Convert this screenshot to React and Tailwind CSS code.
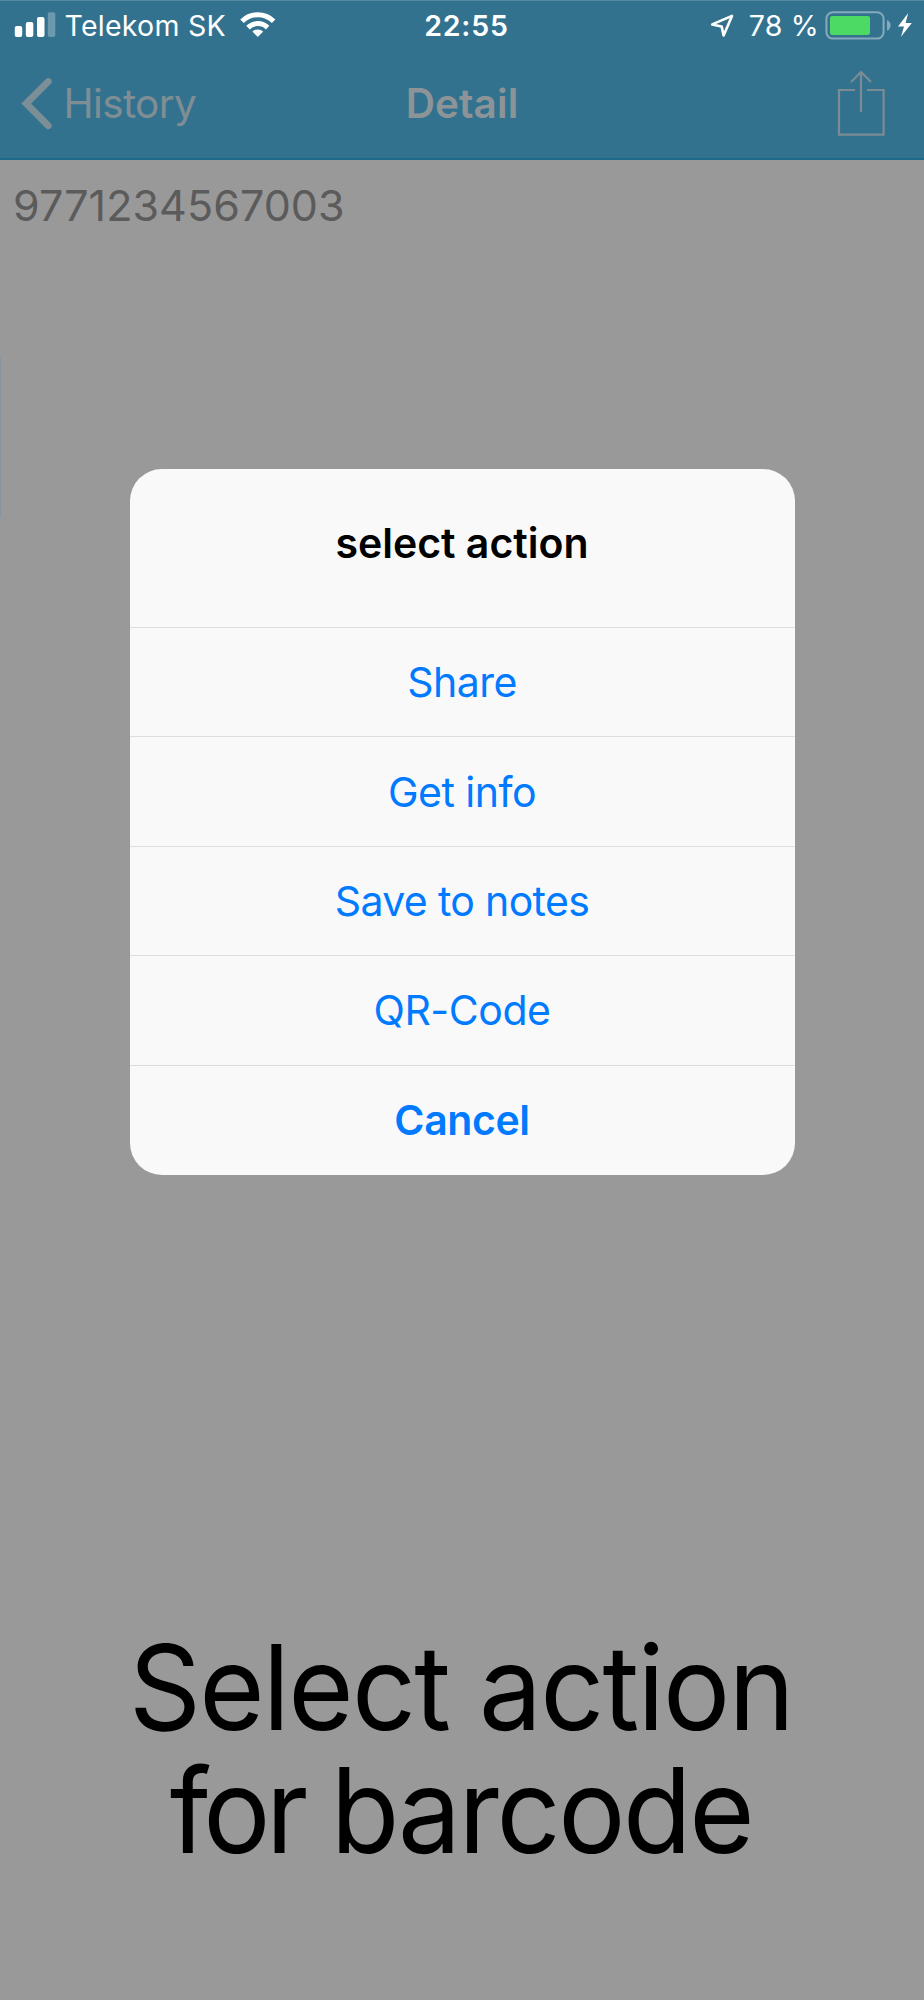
import React from "react";

function SignalBars() {
  return (
    <svg className="ml-[14px] h-[40px] w-[42px] shrink-0" viewBox="14 0 42 40" fill="#fff">
      <rect x="14.8" y="26" width="7.4" height="11" rx="2" />
      <rect x="25.8" y="22" width="7.5" height="15" rx="2" />
      <rect x="37" y="17" width="7.5" height="20" rx="2" />
      <rect x="47.8" y="12.3" width="7.5" height="24.7" rx="2" fillOpacity="0.28" />
    </svg>
  );
}

function WifiIcon() {
  return (
    <svg className="ml-[14px] h-[40px] w-[36px] shrink-0" viewBox="240 0 36 40" fill="none" stroke="#fff" strokeWidth="5">
      <path d="M242 21.2 A22.5 22.5 0 0 1 273.6 21.2" />
      <path d="M248 27.6 A14 14 0 0 1 267.6 27.6" />
      <path d="M257.8 37 L252.4 31.6 A7.7 7.7 0 0 1 263.2 31.6 Z" fill="#fff" stroke="none" />
    </svg>
  );
}

function LocationIcon() {
  return (
    <svg className="h-[40px] w-[26px] shrink-0" viewBox="709 0 26 40" fill="none" stroke="#fff" strokeWidth="2.6" strokeLinejoin="round">
      <path d="M732 15.9 L712.2 24.4 L721.6 26.4 L723.6 35.4 Z" />
    </svg>
  );
}

function Battery() {
  return (
    <svg className="h-[40px] w-[90px] shrink-0" viewBox="824 0 90 40">
      <rect x="826.4" y="12.2" width="57.2" height="26.4" rx="6.5" fill="none" stroke="#84aabc" strokeWidth="2" />
      <rect x="830" y="16" width="40" height="19" rx="2.2" fill="#4cd964" />
      <path d="M887 20 C891.8 21.8 891.8 29 887 30.8 Z" fill="#84aabc" />
      <path d="M908.2 13 L898 26.4 H904 L901 36.8 L911.8 23 H905.6 Z" fill="#fff" />
    </svg>
  );
}

function BackChevron() {
  return (
    <svg className="ml-[20px] mt-[33px] h-[56px] w-[34px] shrink-0" viewBox="20 75 34 56" fill="none" stroke="#7c8f97" strokeWidth="7" strokeLinecap="round" strokeLinejoin="miter">
      <path d="M48.2 81.6 L26.3 103.6 L48.2 125.6" />
    </svg>
  );
}

function ShareIcon() {
  return (
    <svg className="mt-[27px] h-[68px] w-[48px] shrink-0" viewBox="837 69 48 68" fill="none" stroke="#7c8c93" strokeWidth="2.2">
      <path d="M855 90 H839 V134.6 H883.6 V90 H867" />
      <path d="M861 112 V72 M851 82 L861 72 L871 82" />
    </svg>
  );
}

const actions = [
  ["Share", "tracking-[-0.5px]"],
  ["Get info", "pt-px tracking-[-0.5px]"],
  ["Save to notes", "tracking-[-0.66px]"],
  ["QR-Code", "tracking-[-0.45px]"],
];

function ActionDialog() {
  return (
    <div className="mx-auto mt-[229px] flex h-[706px] w-[665px] flex-col overflow-hidden rounded-[32px] bg-[#f9f9f9] text-[41px] leading-none text-[#007aff]">
      <h2 className="flex h-[158px] shrink-0 items-center justify-center pb-[10px] font-semibold text-black">select action</h2>
      {actions.map(([label, tracking]) => (
        <button key={label} className="flex flex-1 items-center justify-center border-t-[1.5px] border-[#dedee0]">
          <span className={tracking}>{label}</span>
        </button>
      ))}
      <button className="flex flex-1 items-center justify-center border-t-[1.5px] border-[#dadbe0] pt-px font-semibold tracking-[-0.4px]">Cancel</button>
    </div>
  );
}

export default function App() {
  return (
    <div className="relative flex h-[2000px] w-[924px] flex-col overflow-hidden bg-[#999999] font-[Inter,sans-serif] text-black">
      <header className="flex h-[160px] shrink-0 flex-col border-t border-b-2 border-t-[#5489a2] border-b-[#1d688b] bg-[#33728f]">
        <div className="-mt-px grid h-[45px] shrink-0 grid-cols-3 text-[28.5px] leading-[51px] text-white">
          <div className="flex whitespace-nowrap">
            <SignalBars />
            <span className="ml-[8.5px] tracking-[0.25px]">Telekom SK</span>
            <WifiIcon />
          </div>
          <div className="pl-[9px] text-center font-semibold tracking-[0.85px]">22:55</div>
          <div className="flex justify-end whitespace-nowrap pr-[10px]">
            <LocationIcon />
            <span className="ml-[14px] mr-[5px] tracking-[0.2px]">78 %</span>
            <Battery />
          </div>
        </div>
        <div className="-mt-[3px] grid h-[116px] shrink-0 grid-cols-3 text-[40.5px] leading-[124px]">
          <div className="flex">
            <BackChevron />
            <span className="ml-[9.5px] tracking-[-0.63px] text-[#7f8e94]">History</span>
          </div>
          <h1 className="text-center font-semibold tracking-[0.1px] text-[#8d9498]">Detail</h1>
          <div className="flex justify-end pr-[39px]">
            <ShareIcon />
          </div>
        </div>
      </header>
      <main className="flex flex-1 flex-col">
        <p className="mt-[4px] h-[76px] pl-[13px] text-[43px] leading-[82px] tracking-[0.08px] text-[#5b5b5b]">9771234567003</p>
        <ActionDialog />
        <div className="mt-[451px] text-center text-[118px] leading-[123px]">
          <p className="-translate-x-px scale-x-[0.95] tracking-[-1.8px]">Select action</p>
          <p className="-translate-x-px scale-x-[0.95] tracking-[-2.5px]">
            <span className="tracking-[-4.8px]">for </span>barcode
          </p>
        </div>
      </main>
      <div className="absolute left-0 top-[357px] h-[160px] w-px bg-[#8595a1]" />
    </div>
  );
}
